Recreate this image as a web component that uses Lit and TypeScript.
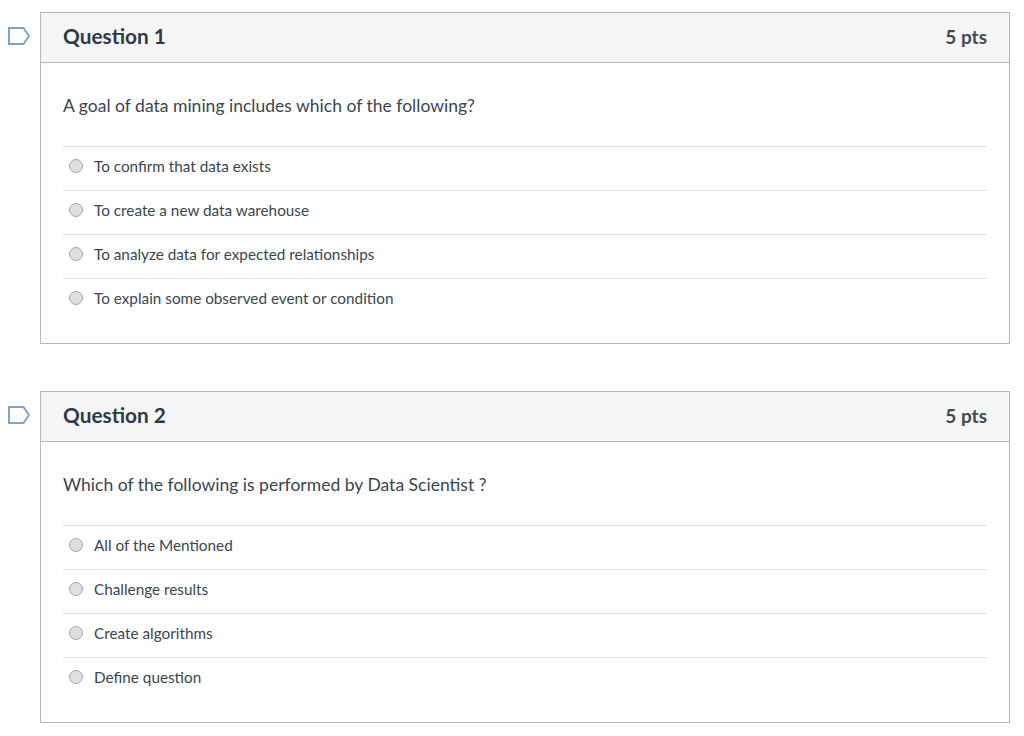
import { LitElement, html, css } from "lit";
import { customElement } from "lit/decorators.js";

const QUESTIONS = [
  { title: "Question 1", pts: "5 pts", text: "A goal of data mining includes which of the following?", answers: ["To confirm that data exists", "To create a new data warehouse", "To analyze data for expected relationships", "To explain some observed event or condition"] },
  { title: "Question 2", pts: "5 pts", text: "Which of the following is performed by Data Scientist ?", answers: ["All of the Mentioned", "Challenge results", "Create algorithms", "Define question"] },
];

@customElement("app-root")
export class AppRoot extends LitElement {
  static styles = css`
    :host { display: block; width: 1024px; height: 736px; overflow: hidden; background: #fff; font-family: Lato, "Liberation Sans", sans-serif; color: #3a464e; }
    .page { display: flex; flex-direction: column; gap: 47px; padding: 12px 14px 0 7px; }
    .row { display: flex; align-items: flex-start; }
    .flag { width: 33px; flex: none; padding-top: 14px; height: 20px; }
    .card { flex: 1; border: 1px solid #b4b8bb; height: 332px; box-sizing: border-box; }
    .head { display: flex; justify-content: space-between; align-items: center; height: 50px; box-sizing: border-box; padding: 0 22px 4px; background: #f5f5f5; border-bottom: 1px solid #b4b8bb; font-size: 20.8px; font-weight: 700; color: #2d3b45; }
    .pts { font-size: 19px; color: #3f4b53; padding-top: 2px; }
    .body { padding: 0 22px; }
    .text { font-size: 17.55px; line-height: 24px; padding: 31px 0 28px; }
    .ans { display: flex; align-items: center; height: 44px; padding-bottom: 5px; border-top: 1px solid #dfe2e4; font-size: 15.3px; box-sizing: border-box; gap: 11px; padding-left: 6px; }
    .radio { width: 14px; height: 14px; border-radius: 50%; border: 1px solid #a4a8ab; background: #dddfe0; box-sizing: border-box; flex: none; }
  `;
  render() {
    return html`<div class="page">${QUESTIONS.map(q => html`
      <div class="row">
        <div class="flag"><svg width="24" height="20" viewBox="0 0 24 20"><path d="M2 2H16.500L22 10L16.500 18H2Z" fill="none" stroke="#7ea6c4" stroke-width="2"/></svg></div>
        <div class="card">
          <div class="head"><span>${q.title}</span><span class="pts">${q.pts}</span></div>
          <div class="body">
            <div class="text">${q.text}</div>
            ${q.answers.map(a => html`<div class="ans"><span class="radio"></span><span>${a}</span></div>`)}
          </div>
        </div>
      </div>`)}</div>`;
  }
}
